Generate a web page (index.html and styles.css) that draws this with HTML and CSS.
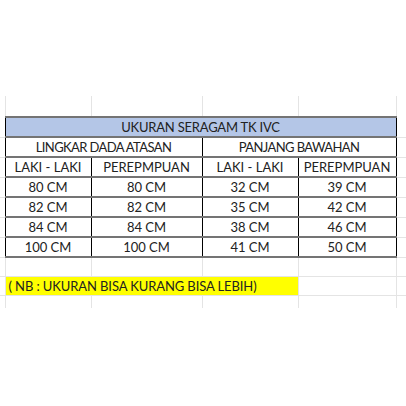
FILE: index.html
```html
<!DOCTYPE html>
<html>
<head>
<meta charset="utf-8">
<link rel="stylesheet" href="styles.css">
</head>
<body>
<div class="sheet">
<table class="grid">
<colgroup><col class="c0"><col class="c1"><col class="c2"><col class="c3"><col class="c4"><col class="c5"></colgroup>
<tr class="r-top"><td></td><td></td><td></td><td></td><td></td><td></td></tr>
<tr class="r"><td class="nr"></td><td colspan="4" class="t title">UKURAN SERAGAM TK IVC</td><td></td></tr>
<tr class="r"><td class="nr"></td><td colspan="2" class="t group">LINGKAR DADA ATASAN</td><td colspan="2" class="t group">PANJANG BAWAHAN</td><td></td></tr>
<tr class="r"><td class="nr"></td><td class="t">LAKI - LAKI</td><td class="t">PEREPMPUAN</td><td class="t">LAKI - LAKI</td><td class="t">PEREPMPUAN</td><td></td></tr>
<tr class="r"><td class="nr"></td><td class="t">80 CM</td><td class="t">80 CM</td><td class="t">32 CM</td><td class="t">39 CM</td><td></td></tr>
<tr class="r"><td class="nr"></td><td class="t">82 CM</td><td class="t">82 CM</td><td class="t">35 CM</td><td class="t">42 CM</td><td></td></tr>
<tr class="r"><td class="nr"></td><td class="t">84 CM</td><td class="t">84 CM</td><td class="t">38 CM</td><td class="t">46 CM</td><td></td></tr>
<tr class="r"><td class="nr"></td><td class="t">100 CM</td><td class="t">100 CM</td><td class="t">41 CM</td><td class="t">50 CM</td><td></td></tr>
<tr class="r"><td></td><td></td><td></td><td></td><td></td><td></td></tr>
<tr class="r"><td></td><td colspan="3" class="note">( NB : UKURAN BISA KURANG BISA LEBIH)</td><td></td><td></td></tr>
<tr class="r-bot"><td></td><td></td><td></td><td></td><td></td><td></td></tr>
</table>
</div>
</body>
</html>
```

FILE: styles.css
```css
html, body {
  margin: 0;
  padding: 0;
  background: #fff;
}
.sheet {
  padding-top: 96px;
  width: 406px;
  overflow: hidden;
}
.grid {
  border-collapse: collapse;
  table-layout: fixed;
  width: 406px;
  font-family: "Lato", "Liberation Sans", sans-serif;
  font-size: 13px;
  color: #222;
}
.c0 { width: 5px; }
.c1 { width: 86px; }
.c2 { width: 111px; }
.c3 { width: 96px; }
.c4 { width: 98px; }
.c5 { width: 10px; }
.grid td {
  padding: 0;
  border-right: 1px solid #e4e4e4;
  border-bottom: 1px solid #e4e4e4;
  text-align: center;
  white-space: nowrap;
  overflow: hidden;
  line-height: 16px;
}
.r-top td { height: 20px; border-bottom: none; }
.r td { height: 18px; }
.r-bot td { height: 12px; border-bottom: none; }
.grid td.nr { border-right: none; }
.grid td.t {
  border-left: 1px solid #000;
  border-right: 1px solid #000;
  border-top: 2px solid #747474;
  border-bottom: 2px solid #747474;
}
.grid td.group {
  letter-spacing: -0.6px;
}
.grid td.title {
  background: #b4c6e7;
  letter-spacing: -0.2px;
}
.grid td.note {
  background: #ffff00;
  text-align: left;
  padding-left: 3px;
  letter-spacing: -0.1px;
}
```
